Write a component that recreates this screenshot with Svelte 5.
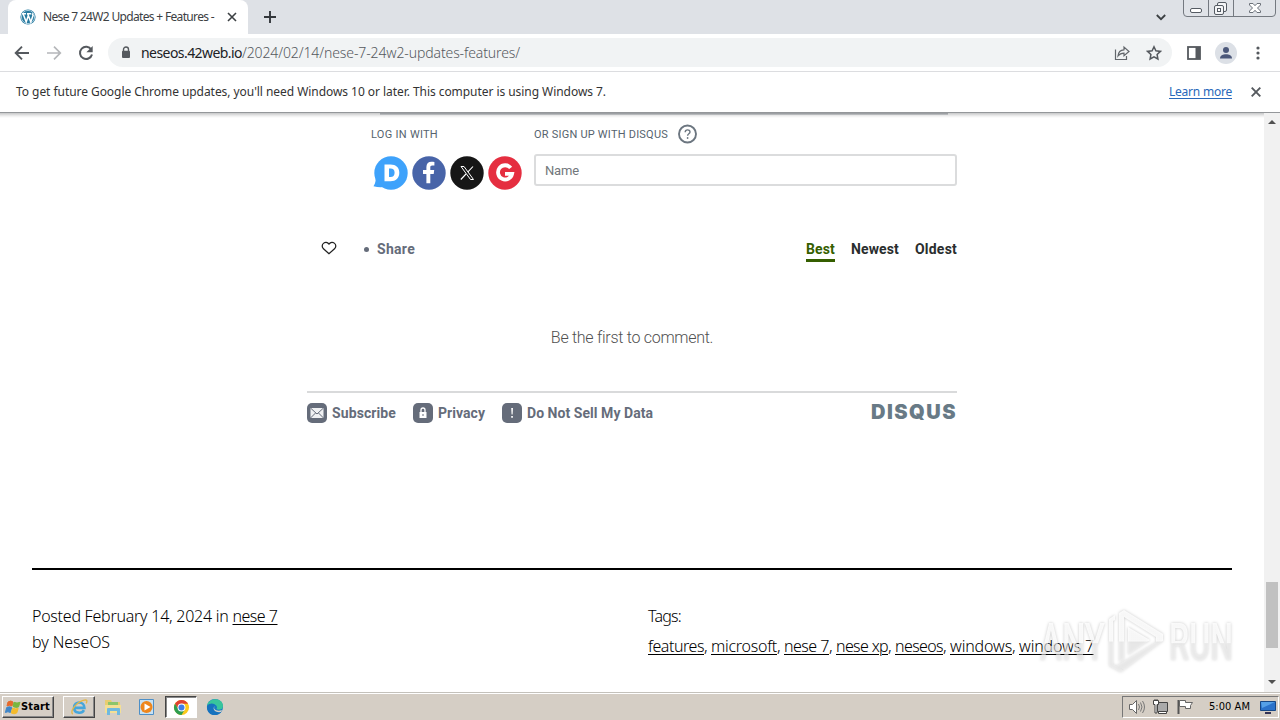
<script>
  function fit(node, width) {
    const natural = node.getBoundingClientRect().width;
    node.style.letterSpacing = `${(width - natural) / node.textContent.length}px`;
  }

  const tags = [
    ['features', 56], ['microsoft', 66], ['nese 7', 45], ['nese xp', 52],
    ['neseos', 48], ['windows', 62], ['windows 7', 75]
  ];
</script>

<div class="screen">
  <header class="tabs">
    <div class="tab">
      <svg class="wp" viewBox="0 0 16 16" width="16" height="16">
        <circle cx="8" cy="8" r="7.6" fill="#26799f" /><circle cx="8" cy="8" r="6.6" fill="none" stroke="#d9edf5" stroke-width=".7" />
        <path d="M2 4.8h4M7 4.8h4M3.2 5l3 8L8.2 7M7.8 5l3 8 2.3-6.7-1.1-2" fill="none" stroke="#fff" stroke-width="1.5" />
      </svg>
      <span class="title"><span use:fit={171}>Nese 7 24W2 Updates + Features -</span></span>
      <svg class="tabx" viewBox="0 0 10 10" width="10" height="10"><path d="M1 1l8 8M9 1L1 9" stroke="#3c4043" stroke-width="1.6" /></svg>
    </div>
    <svg class="plus" viewBox="0 0 12 12" width="12" height="12"><path d="M6 0v12M0 6h12" stroke="#33373c" stroke-width="1.9" /></svg>
    <svg class="down" viewBox="0 0 10 7" width="10" height="7"><path d="M.8 1L5 5.2 9.2 1" fill="none" stroke="#3c4043" stroke-width="1.8" /></svg>
    <svg class="winbtns" viewBox="0 0 94 18" width="94" height="18">
      <path d="M.5-1v14q0 3.500 3.500 3.500h85q3.500 0 3.500-3.500V-1M25.500 0v16M50.500 0v16" fill="#e0e3e8" stroke="#747980" />
      <rect x="7.500" y="8.500" width="11" height="4" rx="1.500" fill="#fff" stroke="#555b63" />
      <rect x="34.500" y="2.500" width="9" height="9" rx="1.500" fill="#f4f5f7" stroke="#555b63" />
      <rect x="31.500" y="5.500" width="9" height="9" rx="1.500" fill="#f4f5f7" stroke="#555b63" /><rect x="34.500" y="8.500" width="3" height="3" fill="#fff" stroke="#555b63" />
      <path d="M66.500 3.500h3.500l2 2.200 2-2.200h3.500v1.500l-3 3 3 3v1.500H74l-2-2.200-2 2.200h-3.500V11l3-3-3-3z" fill="#fff" stroke="#6a7078" />
    </svg>
  </header>

  <div class="toolbar">
    <svg viewBox="0 0 16 16" width="16" height="16"><path d="M15 8H2M8 1.700L1.700 8 8 14.300" fill="none" stroke="#55595e" stroke-width="1.900" /></svg>
    <svg viewBox="0 0 16 16" width="16" height="16"><path d="M1 8h13M8 1.700L14.300 8 8 14.300" fill="none" stroke="#b5b7ba" stroke-width="1.700" /></svg>
    <svg viewBox="0 0 16 16" width="16" height="16"><path d="M13.300 4.700A6.100 6.100 0 1 0 14 9.500" fill="none" stroke="#55595e" stroke-width="2" /><path d="M14.700 1v6.300H8.400z" fill="#55595e" /></svg>
    <div class="omnibox">
      <svg viewBox="0 0 10 13" width="10" height="13"><path d="M2.500 6V3.500a2.500 2.500 0 0 1 5 0V6" fill="none" stroke="#55595e" stroke-width="1.400" /><rect x="1" y="4.700" width="8" height="7.300" rx="1" fill="#55595e" /></svg>
      <span class="url"><span class="host" use:fit={101}>neseos.42web.io</span><span use:fit={278}>/2024/02/14/nese-7-24w2-updates-features/</span></span>
      <svg class="share" viewBox="0 0 16 16" width="16" height="16"><path d="M1.500 4.500v10h11v-3.500M4 11c.3-4 2.500-6 6-6.200V2l5 4.500-5 4.300V8.200C7.500 8.200 5.500 9 4 11z" fill="none" stroke="#62666b" stroke-width="1.200" /></svg>
      <svg class="star" viewBox="0 0 16 16" width="16" height="16"><path d="M8 1.800l1.900 4 4.500.6-3.300 3.100.8 4.500L8 11.800l-3.900 2.200.8-4.500L1.600 6.400l4.500-.6z" fill="none" stroke="#55595e" stroke-width="1.500" /></svg>
    </div>
    <svg class="panel" viewBox="0 0 14 14" width="14" height="14"><rect x="1" y="1" width="12" height="12" fill="#fff" stroke="#55595e" stroke-width="1.800" /><path d="M8.500 1H13v12H8.500z" fill="#55595e" /></svg>
    <svg class="avatar" viewBox="0 0 22 22" width="22" height="22"><circle cx="11" cy="11" r="11" fill="#dce0e6" /><circle cx="11" cy="8" r="3" fill="#4c587a" /><path d="M5 16.500c0-3 3-4.200 6-4.200s6 1.200 6 4.200z" fill="#4c587a" /></svg>
    <svg class="kebab" viewBox="0 0 4 14" width="4" height="14"><g fill="#55595e"><circle cx="2" cy="2" r="1.600" /><circle cx="2" cy="7" r="1.600" /><circle cx="2" cy="12" r="1.600" /></g></svg>
  </div>

  <div class="infobar">
    <span use:fit={590}>To get future Google Chrome updates, you'll need Windows 10 or later. This computer is using Windows 7.</span>
    <a class="learn" href="#learn"><span use:fit={63}>Learn more</span></a>
    <svg viewBox="0 0 10 10" width="10" height="10"><path d="M.7.700l8.600 8.600M9.300.700L.7 9.300" stroke="#55595e" stroke-width="1.900" /></svg>
  </div>

  <main class="view">
    <div class="page">
      <section class="disqus">
        <div class="edge"></div>
        <div class="auth">
          <div class="login">
            <h6><span use:fit={67}>LOG IN WITH</span></h6>
            <div class="socials">
              <svg viewBox="0 0 36 36" width="36" height="36"><circle cx="18" cy="18" r="16.700" fill="#3ea2fb" /><path d="M3 20Q3 28 .5 31.200q5 1.300 10 .8z" fill="#3ea2fb" /><path d="M11.500 9.500h6c5.500 0 8.800 3 8.800 8.200 0 5.300-3.400 8.500-8.800 8.500h-6zM16 13.600v8.500h1.600c2.500 0 4-1.500 4-4.300s-1.500-4.200-4-4.200z" fill="#fff" fill-rule="evenodd" /></svg>
              <svg viewBox="0 0 36 36" width="36" height="36"><circle cx="18" cy="18" r="16.700" fill="#4864a8" /><path d="M15.400 28.200V19H12v-4h3.400v-3c0-3.400 2-5.200 5-5.200 1.400 0 2.700.1 3 .2v3.500h-2.100c-1.600 0-2 .8-2 2V15h3.900l-.5 4h-3.400v9.200z" fill="#fff" /></svg>
              <svg viewBox="0 0 36 36" width="36" height="36"><circle cx="18" cy="18" r="16.700" fill="#161616" /><path d="M12 11.500h3l9.500 13h-3z" fill="none" stroke="#fff" /><path d="M24 11.500l-5.300 5.700M17 19l-5.200 5.500" stroke="#fff" stroke-width="1.100" /></svg>
              <svg viewBox="0 0 36 36" width="36" height="36"><circle cx="18" cy="18" r="16.700" fill="#e52e40" /><path d="M23.700 12.900A7.100 7.100 0 1 0 25.100 18.800H18" fill="none" stroke="#fff" stroke-width="3.800" /></svg>
            </div>
          </div>
          <div class="signup">
            <h6><span use:fit={134}>OR SIGN UP WITH DISQUS</span>
              <svg viewBox="0 0 20 20" width="20" height="20"><circle cx="10.500" cy="10" r="8.500" fill="none" stroke="#6c7680" stroke-width="1.900" /><path d="M8.200 8.200c0-3 4.800-3 4.800-.2 0 1.800-2.400 1.800-2.400 3.700" fill="none" stroke="#6c7680" stroke-width="1.400" /><circle cx="10.600" cy="14" r=".9" fill="#6c7680" /></svg>
            </h6>
            <div class="field"><span use:fit={34}>Name</span></div>
          </div>
        </div>

        <nav class="actions">
          <svg class="heart" viewBox="0 0 16 14" width="16" height="14"><path d="M8 12.800L2.200 7.500C-.7 3.500 4.500-1.300 8 3c3.500-4.300 8.700.5 5.800 4.500z" fill="none" stroke="#222" stroke-width="1.200" /></svg>
          <i></i><span class="sharelabel"><span use:fit={38}>Share</span></span>
          <span class="sort best"><span use:fit={29}>Best</span></span>
          <span class="sort"><span use:fit={48}>Newest</span></span>
          <span class="sort"><span use:fit={42}>Oldest</span></span>
        </nav>

        <p class="empty"><span use:fit={162}>Be the first to comment.</span></p>

        <footer class="dfoot">
          <svg viewBox="0 0 20 20" width="20" height="20"><rect width="20" height="20" rx="5" fill="#656c7a" /><rect x="3.500" y="5" width="13" height="10" fill="#f0f1f3" /><path d="M3.500 5l6.500 6 6.500-6M3.500 15l5-5M16.500 15l-5-5" fill="none" stroke="#656c7a" /></svg>
          <span class="first"><span use:fit={64}>Subscribe</span></span>
          <svg viewBox="0 0 20 20" width="20" height="20"><rect width="20" height="20" rx="5" fill="#656c7a" /><path d="M8 9V7a2 2 0 0 1 4 0v2" fill="none" stroke="#fff" stroke-width="1.300" /><path d="M6.500 9h7v6h-7z" fill="#fff" /><path d="M10 11v2" stroke="#656c7a" /></svg>
          <span class="second"><span use:fit={47}>Privacy</span></span>
          <svg viewBox="0 0 20 20" width="20" height="20"><rect width="20" height="20" rx="5" fill="#656c7a" /><path d="M9.200 5h1.800l-.4 6.500h-1zM9.200 13h1.700v1.700H9.200z" fill="#fff" /></svg>
          <span><span use:fit={126}>Do Not Sell My Data</span></span>
          <strong><span use:fit={86}>DISQUS</span></strong>
        </footer>
      </section>

      <section class="meta">
        <div class="posted">
          <div><span use:fit={196.5}>Posted February 14, 2024 in</span><a href="#cat"><span use:fit={45}>nese 7</span></a></div>
          <div><span use:fit={78}>by NeseOS</span></div>
        </div>
        <div class="tagbox">
          <div><span use:fit={33}>Tags:</span></div>
          <div class="tags">
            {#each tags as [name, width], i}
              <span class="tag"><a href="#tag"><span use:fit={width}>{name}</span></a>{#if i < tags.length - 1}<b>,</b>{/if}</span>
            {/each}
          </div>
        </div>
      </section>
    </div>
    <div class="scroll">
      <svg viewBox="0 0 8 4" width="8" height="4"><path d="M0 4l4-4 4 4z" fill="#505050" /></svg>
      <div class="thumb"></div>
      <svg viewBox="0 0 8 4" width="8" height="4"><path d="M0 0l4 4 4-4z" fill="#505050" /></svg>
    </div>
    <svg class="mark" viewBox="0 0 206 72" width="206" height="72">
      <defs><linearGradient id="fade" x1="0" y1="0" x2="0" y2="1"><stop offset=".5" stop-color="#fff" stop-opacity=".85" /><stop offset=".52" stop-color="#f0f0f0" stop-opacity=".6" /></linearGradient></defs>
      <g fill="url(#fade)">
        <text x="4" y="53" textLength="65" lengthAdjust="spacingAndGlyphs">ANY</text>
        <path fill-rule="evenodd" d="M73 12l6-4v5l-2 1v43l7 4 4 3-4 1-11-6zM83 6l5-3 39 24v7L88 63l-8-4 5-3 35-21v-5L88 10v42l-5 3zM92 20v28l22-15z" />
        <text x="133" y="53" textLength="64" lengthAdjust="spacingAndGlyphs">RUN</text>
      </g>
    </svg>
  </main>

  <footer class="taskbar">
    <div class="start">
      <svg viewBox="0 0 17 16" width="17" height="16"><path d="M4 3q3-2 5 0L8 7Q5 5.500 3 7z" fill="#e66a2c" stroke="#e66a2c" /><path d="M10 3.300q3 1.500 6 0L14.500 8q-3 1-5.500-.6z" fill="#79b63f" stroke="#79b63f" /><path d="M2.700 8.500q3-1.500 5 0l-1.300 5q-2.500-1.500-5 0z" fill="#3f86c8" stroke="#3f86c8" /><path d="M8.700 9q2.500 1.500 5.500.5l-1.500 4.500q-2.500 1.500-5.500 0z" fill="#f4bb2c" stroke="#f4bb2c" /></svg>
      <span use:fit={29}>Start</span>
    </div>
    <div class="task ie"><svg viewBox="0 0 20 20" width="18" height="18"><path d="M15.500 13.500C13 18 4.500 17 4.500 10.700 4.500 3 16 3 16 11H6" fill="none" stroke="#45a6dc" stroke-width="2.900" /><path d="M3 18C-1 15 8 3 17 2q3 0 1 4" fill="none" stroke="#e4b746" stroke-width="1.500" /></svg></div>
    <div class="task"><svg viewBox="0 0 18 18" width="18" height="18"><path d="M1 2h6l1 2h8v10H1z" fill="#e8cd70" /><path d="M4 4h10v4H4z" fill="#8cc56a" /><path d="M1 7h16v8H1z" fill="#f4df94" /><path d="M3 17v-6q0-1 1-1h11q1 0 1 1v6h-3v-4H6v4z" fill="#70b9df" /></svg></div>
    <div class="task"><svg viewBox="0 0 18 18" width="18" height="18"><path d="M1.500 1.500h14v15h-14z" fill="#c7e1f3" stroke="#4d8fc7" /><circle cx="8.500" cy="9" r="6" fill="#ee861c" /><path d="M6.500 5.500l6 3.500-6 3.500z" fill="#fff" /></svg></div>
    <div class="task active"><svg viewBox="0 0 18 18" width="17" height="17"><circle cx="9" cy="9" r="8" fill="#fbc91b" /><path d="M2.100 5A8 8 0 0 1 16 5H9L6 11z" fill="#df4132" /><path d="M2.100 5A8 8 0 0 0 9 17l3.500-6L6 11z" fill="#2d9d50" /><circle cx="9" cy="9" r="4.200" fill="#fff" /><circle cx="9" cy="9" r="3.200" fill="#3e7de7" /></svg></div>
    <div class="task"><svg viewBox="0 0 18 18" width="18" height="18"><circle cx="9" cy="9" r="8" fill="#167ac4" /><path d="M1 8C2-1 17-1 17 8c0 4-5 4.500-6.500 3C13 7 6 4 1 8z" fill="#38c59c" /><path d="M1 8c3-4 8-2.500 8-.5-4 1-1 7.500 6.500 6.200C10 20 0 17 1 8z" fill="#1672be" /><path d="M9 8c-3 3 2 6 7 4l-1 2c-7 1-9-4-6-6z" fill="#d4d0c8" /></svg></div>
    <div class="tray">
      <svg viewBox="0 0 18 16" width="18" height="16"><path d="M1.500 5.500h3l4-4v13l-4-4h-3z" fill="#fff" stroke="#666" /><path d="M10.500 5q2 3 0 6M12.500 3.500q3 4.500 0 9M14.500 2q4 6 0 12" fill="none" stroke="#777" /></svg>
      <svg viewBox="0 0 18 16" width="18" height="16"><path d="M5.500 3.500h10v9h-10z" fill="#aaa" stroke="#444" /><path d="M6.500 12.500h8v2h-8z" fill="#fff" stroke="#444" /><path d="M1.500 1.500h5v4h-1.500v8.500h-2V5.500H1.500zM3 0v2M5 0v2" fill="#fff" stroke="#444" /></svg>
      <svg viewBox="0 0 18 16" width="18" height="16"><path d="M2.500 1v14" stroke="#555" stroke-width="2" /><path d="M3.500 1.500h6v2h7l-2 3 0 3h-5v-2h-6z" fill="#fff" stroke="#666" /></svg>
      <span class="clock"><span use:fit={41}>5:00 AM</span></span>
      <svg viewBox="0 0 16 14" width="16" height="14"><path d="M.500 1.500h15v9H.500z" fill="#2b72ca" stroke="#174785" /><path d="M1 2h14L2 8z" fill="#55a0e7" /><path d="M5 13h6" stroke="#335" stroke-width="2" /></svg>
    </div>
  </footer>
</div>

<style>
  :global(body) { margin: 0; overflow: hidden; }
  * { box-sizing: border-box; }
  svg { display: block; flex: none; }
  a { color: inherit; text-decoration: underline; text-underline-offset: 2px; text-decoration-thickness: 1px; }
  .screen { width: 1280px; height: 720px; display: flex; flex-direction: column; background: #fff; font-family: "Noto Sans", sans-serif; white-space: nowrap; overflow: hidden; }
  .tabs { height: 34px; flex: none; background: #dee1e6; display: flex; align-items: flex-start; }
  .tab { margin-left: 8px; width: 240px; height: 34px; background: #fff; border-radius: 8px 8px 0 0; display: flex; align-items: center; padding: 0 11px 0 12px; font: 12px/20px "Noto Sans", sans-serif; color: #3c4043; }
  .title { width: 180px; margin-left: 7px; overflow: hidden; }
  .tabx { margin-left: 4px; }
  .plus { margin: 11px 0 0 16px; }
  .down { margin: 14px 17px 0 auto; }
  .winbtns { margin-right: 3px; }
  .toolbar { height: 38px; flex: none; border-bottom: 1px solid #dcdde0; display: flex; align-items: center; padding: 0 19px 0 14px; gap: 16px; }
  .omnibox { width: 1064px; height: 29px; margin-left: -2px; border-radius: 15px; background: #f1f3f4; display: flex; align-items: center; padding: 0 10px 0 13px; }
  .url { margin-left: 10px; font: 300 14px/22px "Noto Sans", sans-serif; color: #55595e; }
  .url .host { color: #202124; font-weight: 400; }
  .share { margin-left: auto; }
  .star { margin-left: 16px; }
  .panel { margin-left: -1px; }
  .avatar { margin-left: -2px; }
  .kebab { margin-left: 3px; }
  .infobar { height: 41px; flex: none; padding: 0 19px 0 16px; border-bottom: 1px solid #94979a; display: flex; align-items: center; font: 12px/20px "Noto Sans", sans-serif; color: #333; }
  .learn { margin: 0 19px 0 auto; color: #2868ba; }
  .view { height: 579px; flex: none; position: relative; display: flex; }
  .page { width: 1264px; background: linear-gradient(#c6c7c8, #efefef 3px, #fff 5px); }
  .disqus { width: 650px; margin-left: 307px; }
  .edge { height: 2px; margin: 0 9px 0 73px; background: linear-gradient(#8f9296, #c4c6c8); }
  .auth { display: flex; padding: 8px 0 0 64px; }
  .login { width: 163px; }
  h6 { margin: 0; height: 22px; display: flex; align-items: center; gap: 9px; font: 400 11px/22px Roboto, sans-serif; color: #56636e; }
  h6 span { padding-top: 1px; }
  .socials { display: flex; gap: 2px; margin: 10px 0 0 2px; }
  .signup { flex: 1; }
  .field { margin-top: 9px; height: 32px; border: 2px solid #dbdcdd; border-radius: 3px; padding-left: 9px; font: 13px/29px Roboto, sans-serif; color: #72777b; }
  .actions { height: 30px; margin-top: 43px; padding-left: 14px; display: flex; align-items: center; font: 700 14px/24px Roboto, sans-serif; }
  .heart { margin-top: -2px; }
  .actions i { width: 5px; height: 5px; margin: 0 8px 0 27px; border-radius: 50%; background: #656c7a; }
  .sharelabel { color: #656c7a; margin-right: auto; }
  .sort { height: 26px; margin-left: 16px; line-height: 26px; color: #2a2e2e; border-bottom: 3px solid transparent; }
  .best { color: #355e00; border-color: #355e00; }
  .empty { margin: 59px 0 0; height: 30px; text-align: center; font: 300 16px/30px Roboto, sans-serif; color: #505050; }
  .dfoot { margin-top: 38px; border-top: 2px solid #d9dadb; padding-top: 10px; display: flex; align-items: center; height: 32px; font: 700 14px/20px Roboto, sans-serif; color: #656c7a; }
  .dfoot > span { margin-left: 5px; }
  .first, .second { margin-right: 17px; }
  .dfoot strong { margin: -2px 0 0 auto; font: 900 20px/20px Inter, sans-serif; color: #687a86; }
  .meta { margin: 145px 32px 0; border-top: 2px solid #000; padding-top: 33px; display: grid; grid-template-columns: 616px 1fr; font: 300 16px/26px "Noto Sans", "Open Sans", sans-serif; color: #000; }
  .posted a { margin-left: 4px; }
  .tags { display: flex; gap: 4px; margin-top: 4px; }
  .tag { display: flex; }
  .tag b { font-weight: 300; width: 3px; }
  .scroll { width: 16px; background: #f1f1f1; display: flex; flex-direction: column; align-items: center; padding: 7px 0 8px; }
  .thumb { width: 12px; height: 68px; margin: 458px 0 32px; background: #c1c1c1; }
  .mark { position: absolute; left: 1036px; top: 494px; overflow: visible; font: 500 52px Roboto, sans-serif; filter: drop-shadow(0 0 1.5px rgba(0,0,0,.25)); }
  .taskbar { flex: 1; background: #d5cec5; border-top: 1px solid #c4c1bb; box-shadow: inset 0 1px #fff; display: flex; align-items: center; padding: 1px 1px 0 2px; }
  .start { width: 52px; height: 22px; display: flex; align-items: center; border: 1px solid; border-color: #fff #444 #444 #fff; padding-left: 1px; font: 700 11px/18px "DejaVu Sans Condensed", "DejaVu Sans", sans-serif; color: #000; box-shadow: inset -1px -1px #888; }
  .task { width: 32px; height: 22px; display: grid; place-items: center; margin-right: 2px; }
  .ie { margin-left: 9px; border: 1px solid; border-color: #fff #444 #444 #fff; box-shadow: inset -1px -1px #888; }
  .active { border: 1px solid; border-color: #444 #fff #fff #444; background: #fff; box-shadow: inset 1px 1px #888; }
  .tray { width: 157px; height: 22px; margin-left: auto; border: 1px solid; border-color: #777 #fff #fff #777; display: flex; align-items: center; gap: 6px; padding: 0 2px 0 5px; font: 11px/18px "DejaVu Sans Condensed", "DejaVu Sans", sans-serif; color: #000; }
  .clock { margin: 0 4px 0 auto; }
</style>
